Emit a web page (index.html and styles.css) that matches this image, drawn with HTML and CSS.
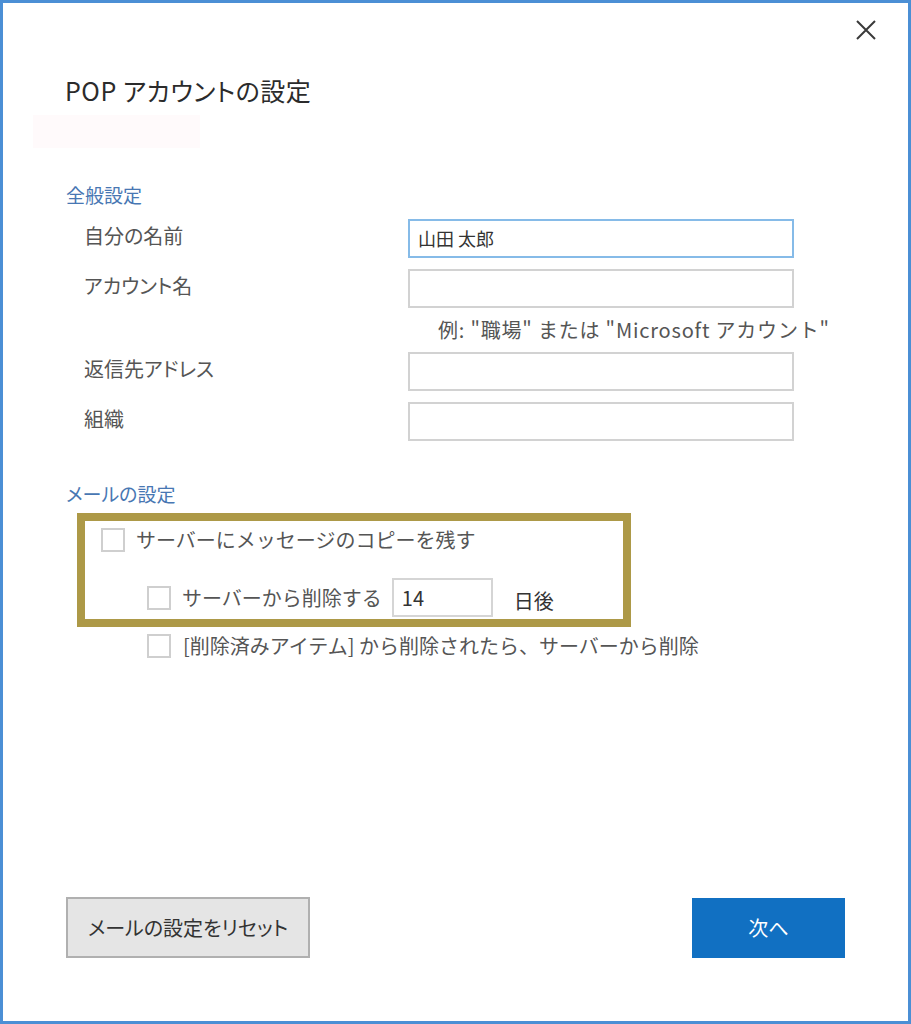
FILE: index.html
```html
<!DOCTYPE html>
<html lang="ja">
<head>
<meta charset="utf-8">
<title>POP アカウントの設定</title>
<link rel="stylesheet" href="styles.css">
</head>
<body>
<div class="window">
  <div class="topbar">
    <button class="close" aria-label="閉じる">
      <svg width="20" height="20" viewBox="0 0 20 20"><path d="M1 1 L19 19 M19 1 L1 19" stroke="#3a3a3a" stroke-width="2" fill="none"/></svg>
    </button>
  </div>
  <h1 class="title">POP アカウントの設定</h1>
  <div class="ghost"></div>

  <h2 class="section">全般設定</h2>
  <div class="form">
    <label class="lbl">自分の名前</label>
    <div class="field focus">山田 太郎</div>
    <label class="lbl">アカウント名</label>
    <div class="field"></div>
    <div></div>
    <div class="hint">例: "職場" または "Microsoft アカウント"</div>
    <label class="lbl">返信先アドレス</label>
    <div class="field"></div>
    <label class="lbl">組織</label>
    <div class="field"></div>
  </div>

  <h2 class="section section-mail">メールの設定</h2>
  <div class="highlight">
    <div class="check-row">
      <span class="box"></span><span class="ctext">サーバーにメッセージのコピーを残す</span>
    </div>
    <div class="check-row sub">
      <span class="box"></span><span class="ctext">サーバーから削除する</span>
      <div class="num">14</div>
      <span class="days">日後</span>
    </div>
  </div>
  <div class="check-row sub outside">
    <span class="box"></span><span class="ctext">[削除済みアイテム] から削除されたら、サーバーから削除</span>
  </div>

  <div class="footer">
    <button class="btn btn-reset">メールの設定をリセット</button>
    <button class="btn btn-next">次へ</button>
  </div>
</div>
</body>
</html>
```

FILE: styles.css
```css
html, body {
  margin: 0;
  padding: 0;
  background: #ffffff;
}

body {
  font-family: "Noto Sans CJK JP", "Noto Sans", sans-serif;
  font-feature-settings: "palt";
  color: #4a4a4a;
}

.window {
  box-sizing: border-box;
  width: 911px;
  height: 1024px;
  border: 3px solid #4b8fd5;
  display: flex;
  flex-direction: column;
  padding: 0 0 0 62px;
  background: #fff;
}

.topbar {
  display: flex;
  justify-content: flex-end;
  padding: 17px 32px 0 0;
}

.close {
  border: 0;
  background: transparent;
  padding: 0;
  width: 20px;
  height: 20px;
  display: flex;
}

.title {
  margin: 33px 0 0 0;
  font-size: 25px;
  line-height: 34px;
  letter-spacing: 0.5px;
  font-weight: 400;
  color: #2b2b2b;
}

.ghost {
  width: 167px;
  height: 33px;
  margin: 8px 0 0 -32px;
  background: #fffafb;
}

.section {
  margin: 34px 0 0 1px;
  font-size: 19px;
  line-height: 26px;
  font-weight: 400;
  color: #4877b3;
}

.form {
  display: grid;
  grid-template-columns: 324px 386px;
  row-gap: 11px;
  margin: 11px 0 0 19px;
  align-items: center;
}

.lbl {
  font-size: 20px;
  line-height: 26px;
  color: #555;
  align-self: start;
  padding-top: 4px;
}

.field {
  box-sizing: border-box;
  height: 39px;
  border: 2px solid #d2d2d2;
  background: #fff;
  font-size: 18px;
  line-height: 35px;
  padding: 0 8px;
  color: #333;
}

.field.focus {
  border-color: #86bbe8;
}

.hint {
  font-size: 20px;
  line-height: 22px;
  letter-spacing: 0.8px;
  font-feature-settings: normal;
  margin-left: 30px;
  white-space: nowrap;
  color: #555;
}

.section-mail {
  margin-top: 40px;
}

.highlight {
  box-sizing: border-box;
  width: 554px;
  margin: 6px 0 0 12px;
  border: 8px solid #ad9947;
  padding: 6px 0 2px 16px;
}

.check-row {
  display: flex;
  align-items: center;
}

.check-row .box {
  box-sizing: border-box;
  width: 24px;
  height: 24px;
  border: 2px solid #cfcfcf;
  background: #fff;
  flex: none;
}

.ctext {
  margin-left: 11px;
  font-size: 20px;
  line-height: 26px;
  font-feature-settings: normal;
  white-space: nowrap;
  color: #555;
}

.check-row.sub {
  margin-top: 25px;
  padding-left: 46px;
}

.num {
  box-sizing: border-box;
  width: 101px;
  height: 39px;
  border: 2px solid #d5d5d5;
  margin-left: 10px;
  padding: 0 8px;
  font-size: 20px;
  line-height: 35px;
  color: #333;
}

.days {
  margin-left: 21px;
  margin-top: 6px;
  font-size: 20px;
  color: #333;
}

.check-row.outside {
  margin-top: 6px;
  padding-left: 82px;
}

.check-row.outside .ctext {
  margin-left: 12px;
}

.footer {
  margin-top: auto;
  display: flex;
  justify-content: space-between;
  align-items: center;
  padding: 0 63px 63px 1px;
}

.btn {
  font-family: inherit;
  font-feature-settings: "palt";
  font-size: 20px;
  cursor: pointer;
}

.btn-reset {
  width: 244px;
  height: 61px;
  background: #e5e5e5;
  border: 2px solid #b0b0b0;
  color: #333;
}

.btn-next {
  width: 153px;
  height: 60px;
  background: #1170c2;
  border: 0;
  color: #fff;
}
```
